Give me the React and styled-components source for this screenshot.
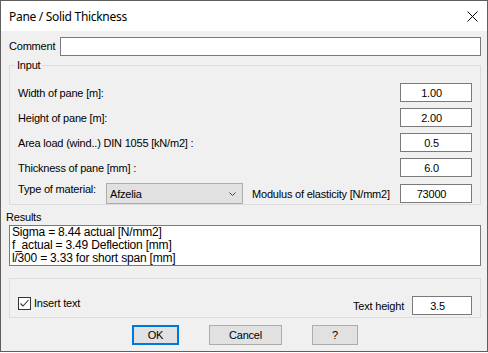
import React from 'react';
import styled, { createGlobalStyle } from 'styled-components';

const Global = createGlobalStyle`
  html, body { margin: 0; padding: 0; background: #ffffff; }
  body { width: 488px; height: 353px; overflow: hidden; }
  * { box-sizing: border-box; }
`;

const Window = styled.div`
  width: 488px;
  height: 352px;
  border: 1px solid #5f5f5f;
  background: #f0f0f0;
  display: flex;
  flex-direction: column;
  font-family: "Liberation Sans", Arial, sans-serif;
  font-size: 11px;
  line-height: 13px;
  letter-spacing: -0.2px;
  color: #000;
`;

const TitleBar = styled.div`
  flex: none;
  height: 30px;
  background: #ffffff;
  display: flex;
  align-items: center;
  padding: 0 9px 0 8px;
`;

const Title = styled.div`
  flex: 1;
  font-family: "Noto Sans", "Open Sans", sans-serif;
  font-size: 12px;
  letter-spacing: -0.3px;
  color: #000;
`;

const CloseIcon = styled.svg`
  display: block;
  width: 11px;
  height: 11px;
`;

const Body = styled.div`
  display: flex;
  flex-direction: column;
  padding: 6px 6px 0 8px;
`;

const CommentRow = styled.div`
  display: flex;
  align-items: center;
  height: 19px;
`;

const CommentLabel = styled.span`
  width: 51px;
  flex: none;
`;

const TextBox = styled.input`
  height: 19px;
  width: ${p => (p.$w ? `${p.$w}px` : 'auto')};
  flex: ${p => (p.$grow ? '1' : 'none')};
  margin: 0;
  border: 1px solid #7a7a7a;
  background: #ffffff;
  font: inherit;
  letter-spacing: inherit;
  color: #000;
  padding: ${p => (p.$center ? '0 9px 0 0' : '0 2px')};
  text-align: ${p => (p.$center ? 'center' : 'left')};
  outline: none;
  border-radius: 0;
`;

const GroupBox = styled.div`
  border: 1px solid #dcdcdc;
  margin-top: ${p => p.$mt}px;
  padding: ${p => p.$pad};
`;

const Legend = styled.span`
  display: block;
  width: fit-content;
  margin: -7px 0 0 -3px;
  padding: 0 2px;
  background: #f0f0f0;
`;

const Rows = styled.div`
  display: flex;
  flex-direction: column;
  gap: 6px;
  margin-top: 11px;
`;

const Row = styled.div`
  display: flex;
  align-items: center;
  justify-content: space-between;
  height: ${p => p.$h || 19}px;
`;

const RowLabel = styled.span`
  padding-top: 1px;
`;

const MaterialLabel = styled.span`
  align-self: flex-start;
  width: 88px;
  flex: none;
`;

const Select = styled.div`
  width: 137px;
  height: 21px;
  flex: none;
  display: flex;
  align-items: center;
  justify-content: space-between;
  border: 1px solid #adadad;
  background: #e1e1e1;
  padding: 1px 6px 0 3px;
`;

const Chevron = styled.svg`
  display: block;
  width: 7px;
  height: 5px;
`;

const ModulusLabel = styled.span`
  margin-left: 9px;
  flex: 1;
  padding-top: 1px;
`;

const SectionLabel = styled.div`
  margin: 6px 0 1px -3px;
`;

const ResultsBox = styled.textarea`
  display: block;
  height: 41px;
  width: 100%;
  margin: 0;
  padding: 0 2px;
  border: 1px solid #7a7a7a;
  background: #ffffff;
  font: inherit;
  font-size: 12px;
  letter-spacing: -0.2px;
  line-height: 13px;
  color: #000;
  resize: none;
  overflow: hidden;
  outline: none;
`;

const OptionRow = styled.div`
  display: flex;
  align-items: center;
  height: 19px;
`;

const CheckLabel = styled.label`
  align-self: flex-start;
  margin-top: 1px;
  display: flex;
  align-items: flex-start;
  gap: 3px;
  flex: 1;
`;

const CheckBox = styled.span`
  width: 13px;
  height: 13px;
  flex: none;
  border: 1px solid #333333;
  background: #ffffff;
  display: flex;
  align-items: center;
  justify-content: center;
`;

const HeightLabel = styled.span`
  margin-right: 8px;
  padding-top: 1px;
`;

const ButtonBar = styled.div`
  display: flex;
  justify-content: center;
  gap: 30px;
  margin-top: 7px;
`;

const Button = styled.button`
  width: ${p => p.$w}px;
  height: 20px;
  margin: 0;
  padding: 0;
  border: ${p => (p.$default ? '2px solid #0078d7' : '1px solid #adadad')};
  background: #e1e1e1;
  font: inherit;
  letter-spacing: inherit;
  color: #000;
  border-radius: 0;
`;

const inputs = [
  { label: 'Width of pane [m]:', value: '1.00' },
  { label: 'Height of pane [m]:', value: '2.00' },
  { label: 'Area load (wind..) DIN 1055 [kN/m2] :', value: '0.5' },
  { label: 'Thickness of pane [mm] :', value: '6.0' },
];

const results = 'Sigma = 8.44 actual [N/mm2]\nf_actual = 3.49 Deflection [mm]\nl/300 = 3.33 for short span [mm]';

export default function App() {
  return (
    <>
      <Global />
      <Window>
        <TitleBar>
          <Title>Pane / Solid Thickness</Title>
          <CloseIcon viewBox="0 0 11 11">
            <path d="M0.5 0.5 L10.5 10.5 M10.5 0.5 L0.5 10.5" stroke="#000" strokeWidth="1" fill="none" />
          </CloseIcon>
        </TitleBar>
        <Body>
          <CommentRow>
            <CommentLabel>Comment</CommentLabel>
            <TextBox $grow defaultValue="" />
          </CommentRow>

          <GroupBox $mt={9} $pad="0 8px 0 8px">
            <Legend>Input</Legend>
            <Rows>
              {inputs.map(r => (
                <Row key={r.label}>
                  <RowLabel>{r.label}</RowLabel>
                  <TextBox $center $w={72} defaultValue={r.value} />
                </Row>
              ))}
              <Row $h={21}>
                <MaterialLabel>Type of material:</MaterialLabel>
                <Select>
                  <span>Afzelia</span>
                  <Chevron viewBox="0 0 7 5">
                    <polyline points="0.5,0.5 3.5,3.5 6.5,0.5" stroke="#444" strokeWidth="1" fill="none" />
                  </Chevron>
                </Select>
                <ModulusLabel>Modulus of elasticity [N/mm2]</ModulusLabel>
                <TextBox $center $w={72} defaultValue="73000" />
              </Row>
            </Rows>
          </GroupBox>

          <SectionLabel>Results</SectionLabel>
          <ResultsBox readOnly value={results} />

          <GroupBox $mt={12} $pad="17px 8px 2px 8px">
            <OptionRow>
              <CheckLabel>
                <CheckBox>
                  <svg width="11" height="11" viewBox="0 0 11 11">
                    <polyline points="1.5,5.5 4,8 9.5,2" stroke="#333" strokeWidth="1.1" fill="none" />
                  </svg>
                </CheckBox>
                <span>Insert text</span>
              </CheckLabel>
              <HeightLabel>Text height</HeightLabel>
              <TextBox $center $w={60} defaultValue="3.5" />
            </OptionRow>
          </GroupBox>

          <ButtonBar>
            <Button $default $w={47}>OK</Button>
            <Button $w={73}>Cancel</Button>
            <Button $w={46}>?</Button>
          </ButtonBar>
        </Body>
      </Window>
    </>
  );
}
